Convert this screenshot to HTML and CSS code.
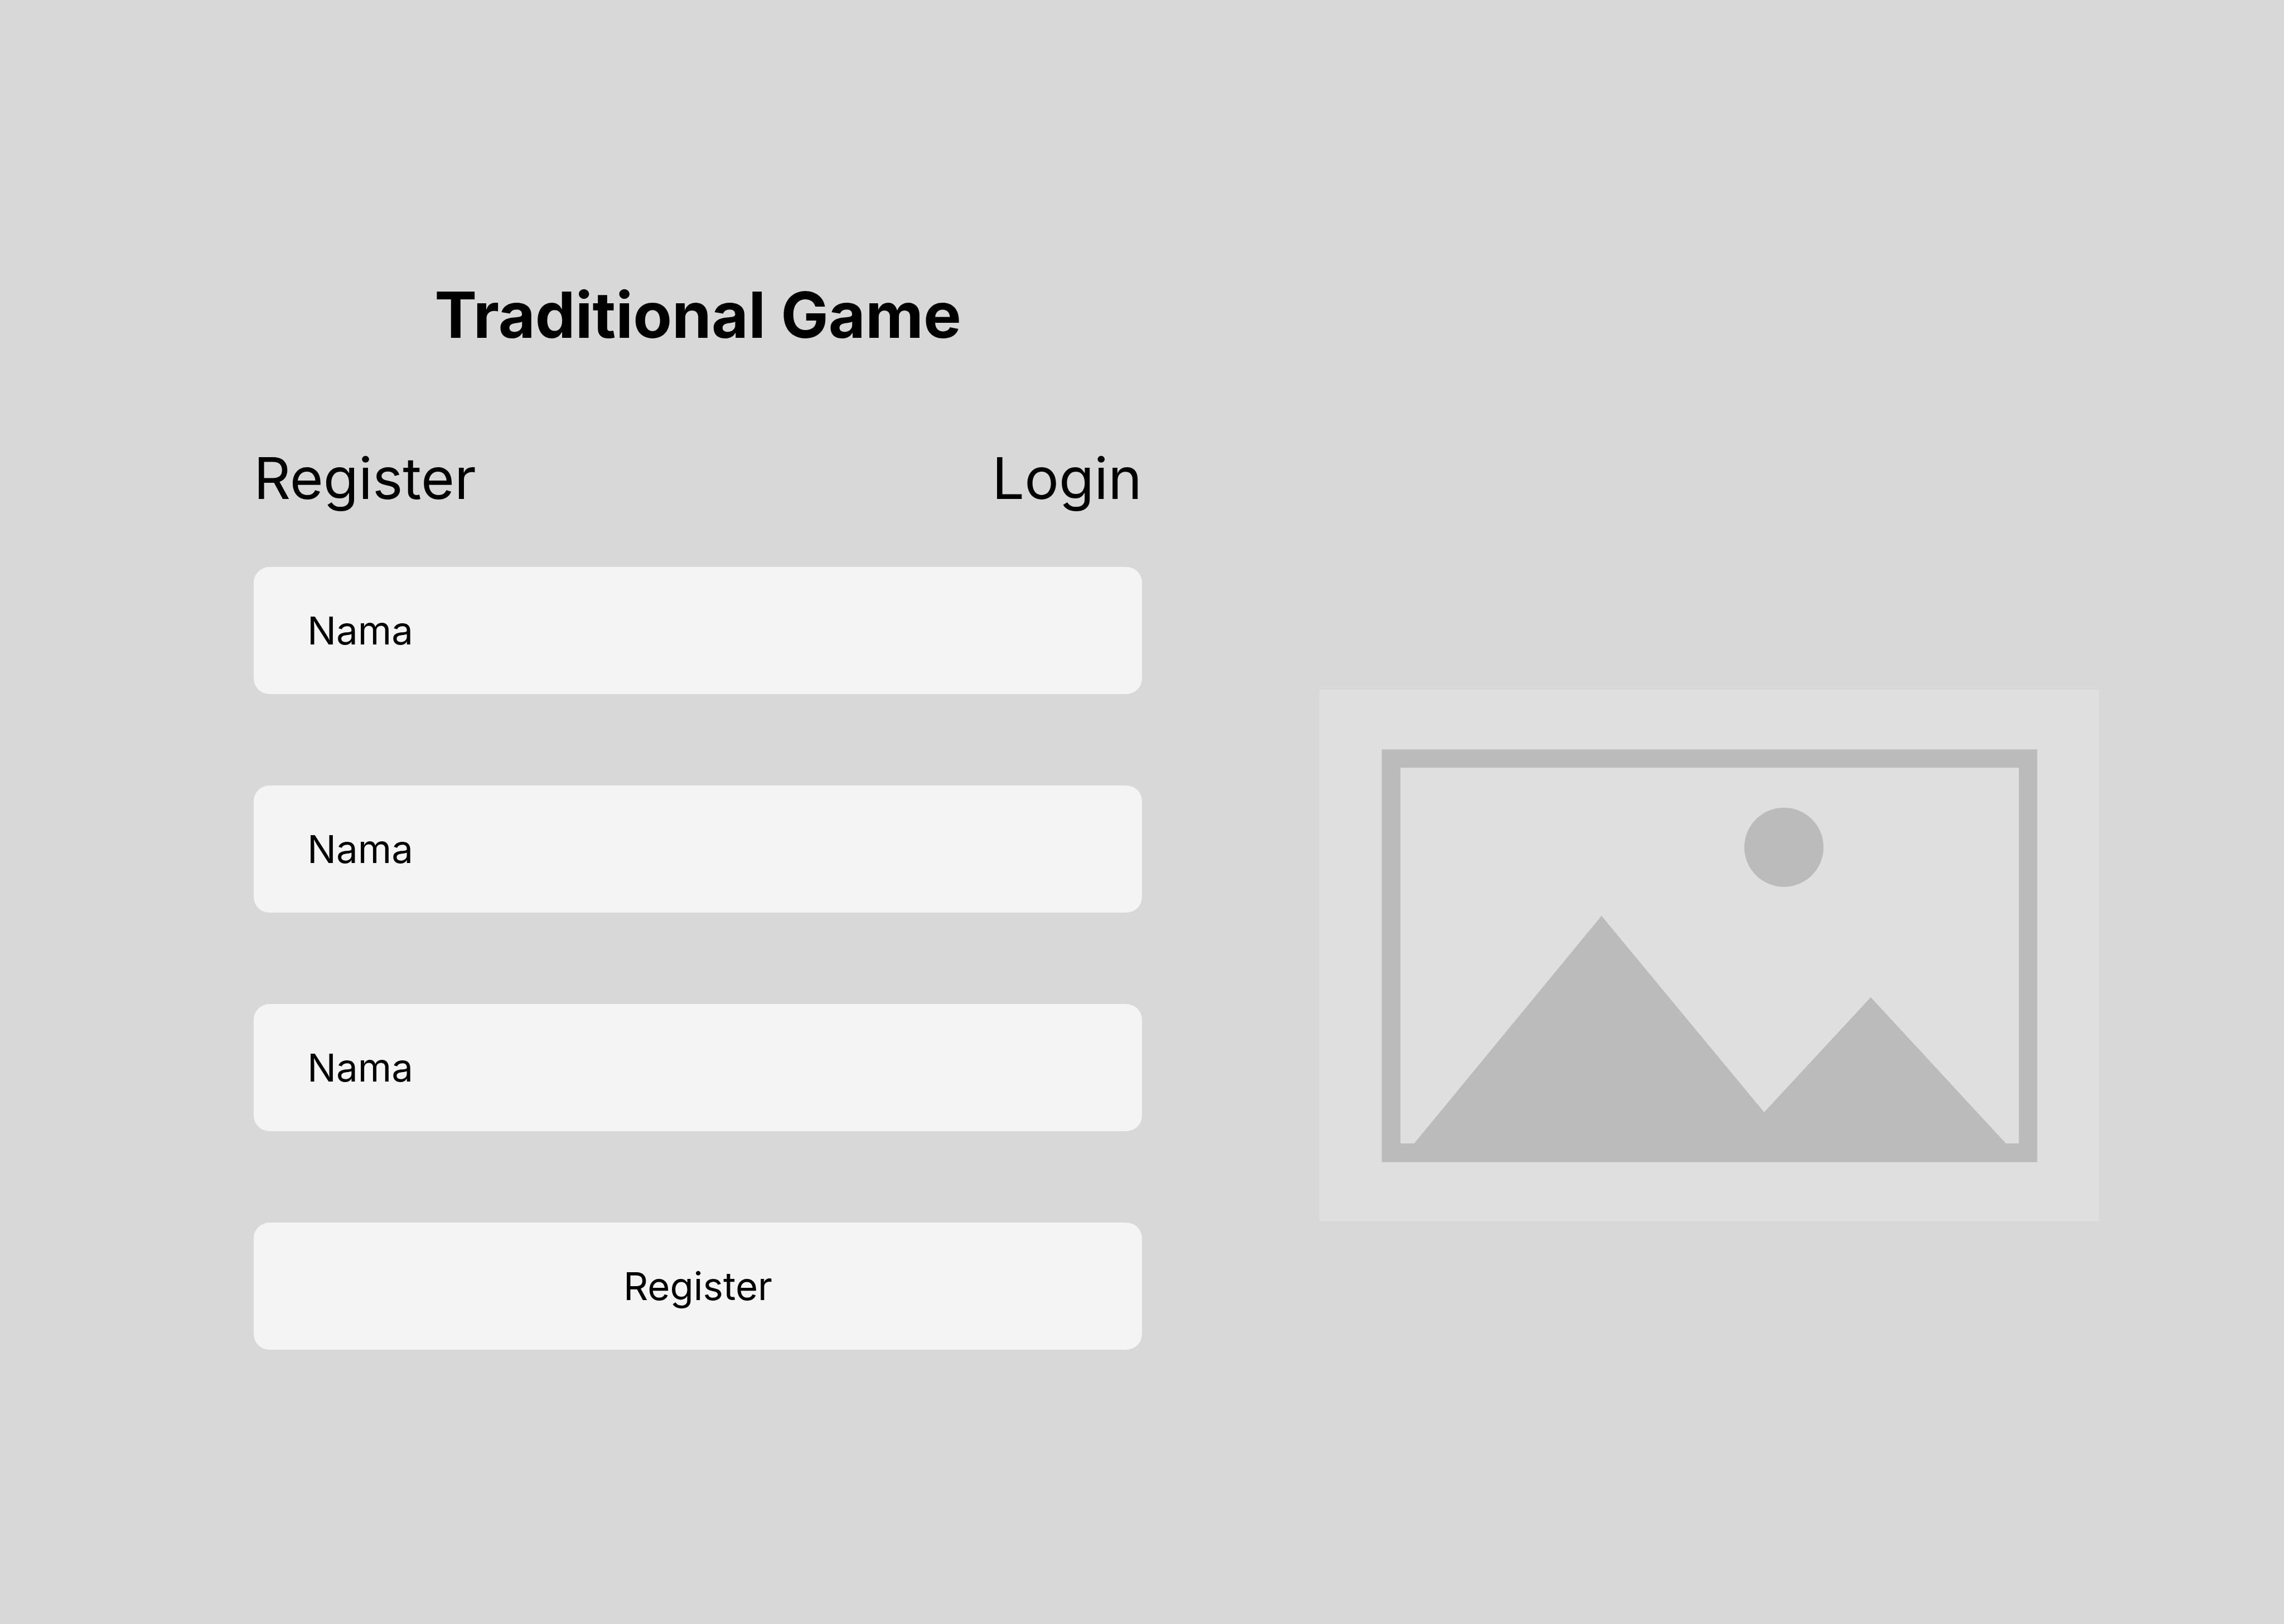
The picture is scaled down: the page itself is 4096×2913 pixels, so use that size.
FILE: index.html
```html
<!DOCTYPE html>
<html lang="id">
<head>
  <meta charset="utf-8">
  <meta name="viewport" content="width=device-width, initial-scale=1">
  <title>Traditional Game</title>
  <link rel="stylesheet" href="styles.css">
</head>
<body>
  <main class="page">
    <section class="account">
      <h1 class="title">Traditional Game</h1>
      <nav class="tabs">
        <a class="tab" href="#register">Register</a>
        <a class="tab" href="#login">Login</a>
      </nav>
      <form class="form" id="register">
        <input class="field" type="text" placeholder="Nama" aria-label="Nama">
        <input class="field" type="text" placeholder="Nama" aria-label="Nama">
        <input class="field" type="text" placeholder="Nama" aria-label="Nama">
        <button class="submit" type="submit">Register</button>
      </form>
    </section>
    <figure class="preview">
      <svg class="picture" viewBox="0 0 2047 1397" aria-hidden="true">
        <rect class="picture-back" width="2047" height="1397"/>
        <path class="picture-shape" fill-rule="evenodd" d="M164 157H1885V1241H164ZM213 205V1192H249L741 594L1168 1110L1448 808L1803 1192H1837V205Z"/>
        <circle class="picture-shape" cx="1220" cy="414" r="104"/>
      </svg>
    </figure>
  </main>
</body>
</html>
```
FILE: styles.css
```css
* {
  box-sizing: border-box;
}

body {
  margin: 0;
  background: #d8d8d8;
  color: #000;
  font-family: Inter, "Liberation Sans", sans-serif;
}

.page {
  display: grid;
  grid-template-columns: minmax(0, 1593fr) minmax(0, 1398fr);
  column-gap: 318px;
  align-items: start;
  min-height: 100vh;
  padding: 496px 332px 0 455px;
}

.account {
  display: flex;
  flex-direction: column;
}

.title {
  margin: 0 0 162px;
  font-size: 114px;
  font-weight: 700;
  line-height: 138px;
  text-align: center;
}

.tabs {
  display: flex;
  justify-content: space-between;
  margin-bottom: 97px;
}

.tab {
  color: inherit;
  font-size: 103px;
  line-height: 124px;
  text-decoration: none;
}

.form {
  display: flex;
  flex-direction: column;
  gap: 164px;
}

.field,
.submit {
  width: 100%;
  height: 228px;
  padding: 0 96px;
  border: 0;
  border-radius: 28px;
  background: #f4f4f4;
  color: inherit;
  font-family: inherit;
  font-size: 69px;
  line-height: 82px;
}

.field::placeholder {
  color: inherit;
  opacity: 1;
}

.submit {
  text-align: center;
  cursor: pointer;
}

.preview {
  margin: 741px 0 0;
}

.picture {
  display: block;
  width: 100%;
  height: auto;
}

.picture-back {
  fill: #dfdfdf;
}

.picture-shape {
  fill: #bbb;
}
```
